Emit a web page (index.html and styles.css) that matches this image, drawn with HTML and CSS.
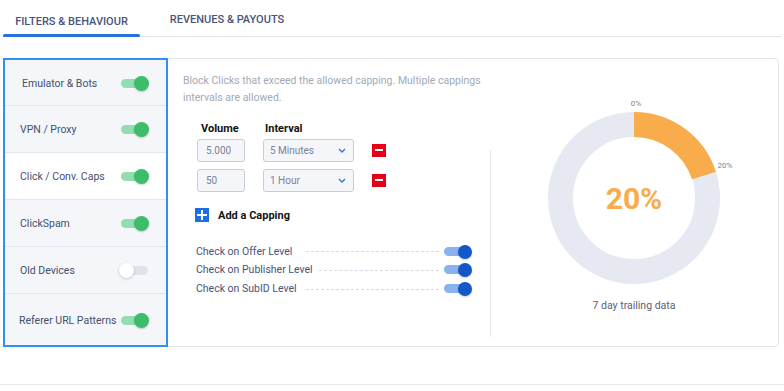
FILE: index.html
```html
<!DOCTYPE html>
<html lang="en">

<head>
    <meta charset="UTF-8">
    <meta name="viewport" content="width=device-width, initial-scale=1.0">
    <title>Filters & Behaviour</title>
    <link rel="stylesheet" href="styles.css">
</head>

<body>
    <!-- Tabs -->
    <nav class="tabs">
        <div class="tab active">FILTERS &amp; BEHAVIOUR</div>
        <div class="tab">REVENUES &amp; PAYOUTS</div>
    </nav>

    <div class="card">
        <!-- Filter list -->
        <aside class="sidebar">
            <div class="filter-row">
                <span class="filter-name">Emulator &amp; Bots</span>
                <span class="toggle green on"></span>
            </div>
            <div class="filter-row">
                <span class="filter-name">VPN / Proxy</span>
                <span class="toggle green on"></span>
            </div>
            <div class="filter-row selected">
                <span class="filter-name">Click / Conv. Caps</span>
                <span class="toggle green on"></span>
            </div>
            <div class="filter-row">
                <span class="filter-name">ClickSpam</span>
                <span class="toggle green on"></span>
            </div>
            <div class="filter-row">
                <span class="filter-name">Old Devices</span>
                <span class="toggle off"></span>
            </div>
            <div class="filter-row">
                <span class="filter-name">Referer URL Patterns</span>
                <span class="toggle green on"></span>
            </div>
        </aside>

        <!-- Capping settings -->
        <section class="settings">
            <p class="description">Block Clicks that exceed the allowed capping. Multiple cappings intervals are allowed.</p>

            <div class="capping-form">
                <div class="capping-head">
                    <span class="col-volume">Volume</span>
                    <span class="col-interval">Interval</span>
                </div>
                <div class="capping-row">
                    <div class="field volume">5.000</div>
                    <div class="field select">
                        <span>5 Minutes</span>
                        <svg width="8" height="5" viewBox="0 0 8 5"><polyline points="1,1 4,4 7,1" fill="none" stroke="#2f6fe0" stroke-width="1.3"/></svg>
                    </div>
                    <span class="remove"></span>
                </div>
                <div class="capping-row">
                    <div class="field volume">50</div>
                    <div class="field select">
                        <span>1 Hour</span>
                        <svg width="8" height="5" viewBox="0 0 8 5"><polyline points="1,1 4,4 7,1" fill="none" stroke="#2f6fe0" stroke-width="1.3"/></svg>
                    </div>
                    <span class="remove"></span>
                </div>
                <div class="add-capping">
                    <span class="add-icon"></span>
                    <span>Add a Capping</span>
                </div>
            </div>

            <div class="levels">
                <div class="level-row">
                    <span class="level-name">Check on Offer Level</span>
                    <span class="dashes"></span>
                    <span class="toggle blue on"></span>
                </div>
                <div class="level-row">
                    <span class="level-name">Check on Publisher Level</span>
                    <span class="dashes"></span>
                    <span class="toggle blue on"></span>
                </div>
                <div class="level-row">
                    <span class="level-name">Check on SubID Level</span>
                    <span class="dashes"></span>
                    <span class="toggle blue on"></span>
                </div>
            </div>
        </section>

        <!-- Chart -->
        <section class="chart">
            <svg class="donut" width="240" height="200" viewBox="0 0 240 200">
                <circle cx="120" cy="105" r="73.5" fill="none" stroke="#e6e9f2" stroke-width="25"/>
                <circle cx="120" cy="105" r="73.5" fill="none" stroke="#f8ac4b" stroke-width="25"
                    stroke-dasharray="92.4 369.4" transform="rotate(-90 120 105)"/>
                <text x="122" y="13" class="tick">0%</text>
                <text x="211" y="75" class="tick">20%</text>
                <text x="120" y="116" class="big">20%</text>
            </svg>
            <div class="caption">7 day trailing data</div>
        </section>
    </div>

    <footer class="bottom-line"></footer>
</body>

</html>
```

FILE: styles.css
```css
* {
    box-sizing: border-box;
    margin: 0;
    padding: 0;
}

body {
    font-family: Roboto, 'Liberation Sans', sans-serif;
    background-color: #fff;
    color: #44506b;
    width: 784px;
}

/* Tabs */
.tabs {
    display: flex;
    margin: 0 3px 0 3px;
    height: 37px;
    border-bottom: 1px solid #dfe4ec;
}

.tab {
    font-size: 11px;
    font-weight: 500;
    color: #48557a;
    text-align: center;
    padding-top: 15px;
    position: relative;
}

.tab:first-child {
    width: 137px;
}

.tab:last-child {
    width: 174px;
    padding-top: 13px;
}

.tab.active::after {
    content: "";
    position: absolute;
    left: 0;
    right: 0;
    bottom: -1px;
    height: 3px;
    border-radius: 2px;
    background-color: #2873d9;
}

/* Card */
.card {
    display: flex;
    margin: 21px 5px 0 3px;
    height: 289px;
    border: 1px solid #e1e5ec;
    border-radius: 4px;
}

.sidebar {
    width: 165px;
    margin: -1px 0 -1px -1px;
    border: 2px solid #2f8ff4;
    background-color: #f4f6fa;
    display: flex;
    flex-direction: column;
}

.filter-row {
    height: 47px;
    display: flex;
    align-items: center;
    justify-content: space-between;
    padding: 1px 18px 0 15px;
    border-bottom: 1px solid #e2e6ee;
    font-size: 10.5px;
    color: #44506e;
    white-space: nowrap;
}

.filter-row:first-child {
    height: 46px;
    padding-left: 17px;
}

.filter-row:last-child {
    flex: 1;
    border-bottom: none;
    padding-left: 14px;
}

.filter-row.selected {
    background-color: #fff;
}

/* Toggles */
.toggle {
    position: relative;
    display: inline-block;
    width: 27px;
    height: 9px;
    border-radius: 5px;
    flex-shrink: 0;
}

.toggle::after {
    content: "";
    position: absolute;
    top: -3px;
    width: 15px;
    height: 15px;
    border-radius: 50%;
    box-shadow: 0 1px 2px rgba(0, 0, 0, 0.2);
}

.toggle.on::after {
    right: -1px;
}

.toggle.green {
    background-color: #93deb0;
}

.toggle.green::after {
    background-color: #3bbd69;
}

.toggle.blue {
    background-color: #8ab2ee;
}

.toggle.blue::after {
    background-color: #1358c9;
    width: 14px;
    height: 14px;
    top: -2px;
}

.toggle.off {
    background-color: #dfe3ea;
}

.toggle.off::after {
    left: -2px;
    background-color: #fff;
    box-shadow: 0 1px 3px rgba(0, 0, 0, 0.2);
}

/* Settings */
.settings {
    width: 322px;
    padding: 13px 0 0 15px;
}

.description {
    font-size: 10.5px;
    line-height: 17px;
    color: #a2a9b7;
    width: 300px;
}

.capping-form {
    margin: 16px 0 0 13px;
}

.capping-head {
    display: flex;
    font-size: 11px;
    font-weight: 700;
    color: #111;
    height: 17px;
}

.col-volume {
    width: 67px;
    padding-left: 5px;
}

.col-interval {
    padding-left: 2px;
}

.capping-row {
    display: flex;
    align-items: center;
    margin-bottom: 7px;
    margin-left: 1px;
}

.field {
    height: 23px;
    background-color: #f4f6fa;
    border: 1px solid #c6cdd9;
    border-radius: 3px;
    font-size: 10px;
    color: #7a8497;
    display: flex;
    align-items: center;
}

.field.volume {
    width: 48px;
    padding-left: 8px;
}

.field.select {
    width: 91px;
    margin-left: 18px;
    padding: 0 7px 0 6px;
    justify-content: space-between;
}

.remove {
    position: relative;
    width: 14px;
    height: 13px;
    margin-left: 18px;
    background-color: #e50018;
}

.remove::after {
    content: "";
    position: absolute;
    left: 3px;
    right: 3px;
    top: 5px;
    height: 2px;
    background-color: #fff;
}

.add-capping {
    display: flex;
    align-items: center;
    margin-top: 16px;
    margin-left: -1px;
    font-size: 11px;
    font-weight: 700;
    color: #151515;
}

.add-icon {
    position: relative;
    width: 14px;
    height: 14px;
    margin-right: 9px;
    background-color: #1c6fe2;
}

.add-icon::before,
.add-icon::after {
    content: "";
    position: absolute;
    background-color: #fff;
}

.add-icon::before {
    left: 2px;
    right: 2px;
    top: 6px;
    height: 2px;
}

.add-icon::after {
    top: 2px;
    bottom: 2px;
    left: 6px;
    width: 2px;
}

/* Check levels */
.levels {
    margin: 20px 0 0 13px;
    width: 275px;
}

.level-row {
    display: flex;
    align-items: center;
    height: 18px;
    font-size: 10.5px;
    color: #47537a;
}

.level-row + .level-row {
    height: 19px;
}

.level-name {
    min-width: 104px;
}

.dashes {
    flex: 1;
    margin: 1px 5px 0 6px;
    border-top: 1px dashed #d5dbe6;
}

/* Chart */
.chart {
    flex: 1;
    display: flex;
    flex-direction: column;
    align-items: center;
    padding-top: 34px;
    position: relative;
}

.chart::before {
    content: "";
    position: absolute;
    left: 0;
    top: 91px;
    bottom: 9px;
    border-left: 1px solid #e3e7ee;
}

.donut .tick {
    font-size: 8px;
    fill: #7d8596;
    text-anchor: middle;
}

.donut .big {
    font-size: 30px;
    font-weight: 700;
    fill: #f8ac4b;
    text-anchor: middle;
}

.caption {
    margin-top: 6px;
    font-size: 10.5px;
    color: #596173;
}

.bottom-line {
    margin-top: 37px;
    border-top: 1px solid #e6e9ef;
}
```
